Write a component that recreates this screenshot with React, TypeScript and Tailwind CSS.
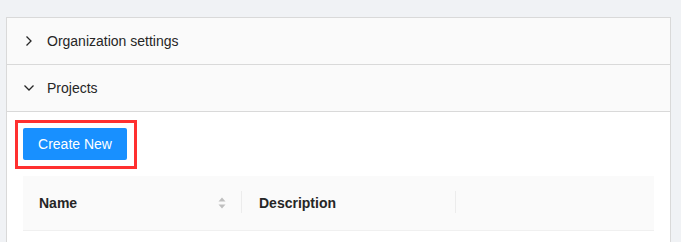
import React from "react";

function Chevron({ open }: { open?: boolean }) {
  return (
    <svg
      width="12"
      height="12"
      viewBox="0 0 12 12"
      className={open ? "rotate-90" : ""}
      fill="none"
      stroke="#262626"
      strokeWidth="1.3"
    >
      <path d="M3.5 1.5l4.5 4.5-4.5 4.5" />
    </svg>
  );
}

function SortIcon() {
  return (
    <svg width="10" height="14" viewBox="0 0 10 14" fill="#bfbfbf">
      <path d="M5 1.5l3.5 4h-7z" />
      <path d="M5 12.5l3.5-4h-7z" />
    </svg>
  );
}

export default function App() {
  return (
    <div
      className="w-[681px] h-[242px] bg-[#f0f2f5] pt-[17px] pl-[6px] overflow-hidden"
      style={{ fontFamily: '"Liberation Sans", Arial, sans-serif' }}
    >
      <div className="w-[665px] border border-[#d9d9d9] bg-[#fafafa] text-[14px] text-[#262626]">
        {/* Organization settings */}
        <div className="flex items-center h-[47px] pl-4 border-b border-[#d9d9d9]">
          <Chevron />
          <span className="ml-3 leading-[22px]">Organization settings</span>
        </div>

        {/* Projects */}
        <div className="flex items-center h-[47px] pl-4 border-b border-[#d9d9d9]">
          <Chevron open />
          <span className="ml-3 leading-[22px]">Projects</span>
        </div>

        <div className="bg-white p-4 h-[140px]">
          <div className="relative inline-block align-top">
            <button className="block h-8 w-[104px] rounded-[2px] bg-[#1890ff] text-white text-[14px]">
              Create New
            </button>
            <span className="absolute -left-2 -top-2 -right-[10px] -bottom-[9px] border-[3px] border-[#ff3030]" />
          </div>

          <div className="mt-4 flex h-[55px] bg-[#fafafa] border-b border-[#f0f0f0] font-semibold">
            <div className="relative flex items-center w-[219px] px-4">
              <span className="flex-1">Name</span>
              <span className="mr-[-1px]">
                <SortIcon />
              </span>
              <span className="absolute right-0 top-[15px] h-[22px] w-px bg-[#ececec]" />
            </div>
            <div className="relative flex items-center w-[214px] pl-[17px] pr-4">
              <span>Description</span>
              <span className="absolute right-0 top-[15px] h-[22px] w-px bg-[#ececec]" />
            </div>
            <div className="flex-1" />
          </div>
        </div>
      </div>
    </div>
  );
}
